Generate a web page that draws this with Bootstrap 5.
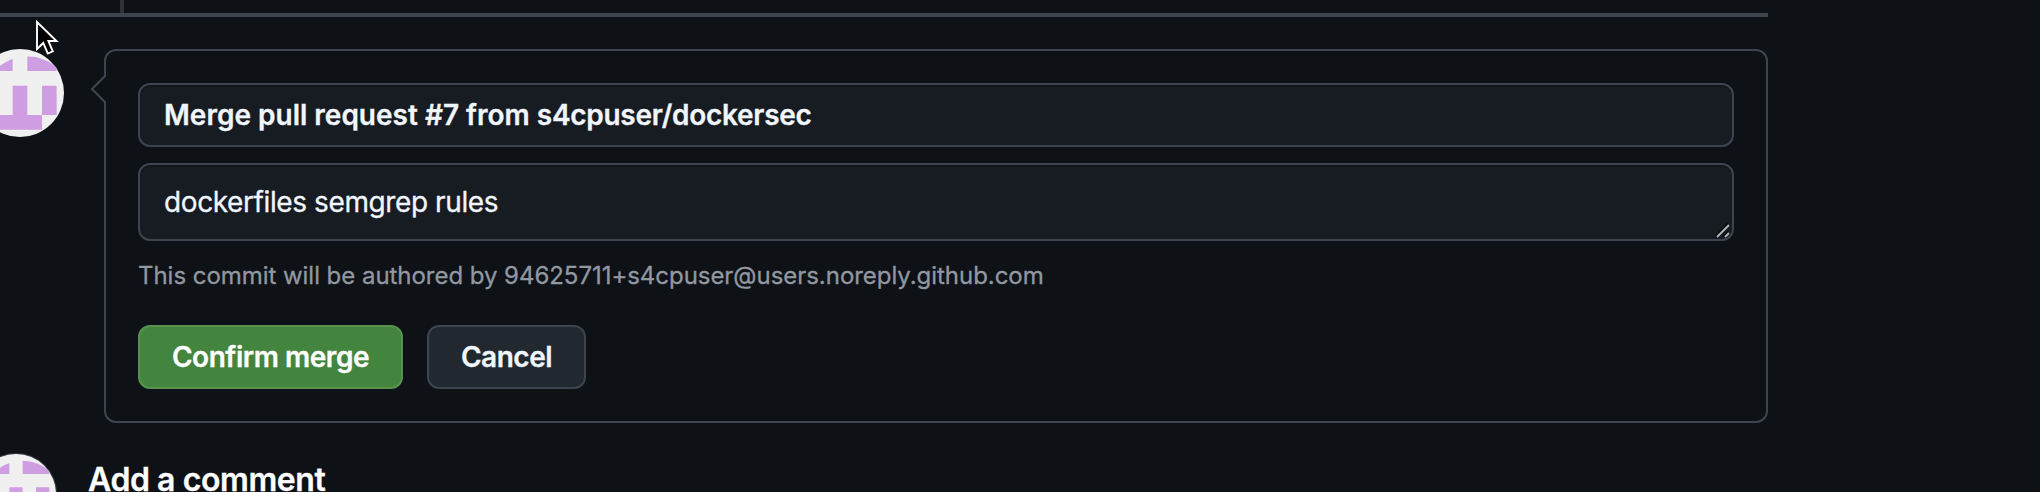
<!DOCTYPE html>
<html lang="en" data-bs-theme="dark">
<head>
<meta charset="utf-8">
<meta name="viewport" content="width=device-width, initial-scale=1">
<title>Merge pull request</title>
<link href="https://cdn.jsdelivr.net/npm/bootstrap@5.3.0/dist/css/bootstrap.min.css" rel="stylesheet">
<style>
  body { height: 492px; background: #0e1116; color: #f0f6fc; font-family: Inter, "Liberation Sans", sans-serif; font-size: 28px; line-height: 40px; -webkit-text-stroke: .3px; }
  .page-col { width: 1768px; height: 492px; }
  .timeline-end { height: 17px; border-bottom: 4px solid #3d444d; padding-left: 120px; }
  .timeline-end div { width: 4px; height: 13px; background: #303237; }
  .avatar-lg { width: 88px; height: 88px; margin-left: -24px; }
  .avatar-sm { width: 82px; height: 82px; margin-left: -25px; }
  .merge-row { margin-top: 32px; gap: 40px; }
  .merge-box { height: 374px; padding: 32px; background: #0e1116; border: 2px solid #3d444d; border-radius: 12px; }
  .caret { left: -17px; top: 23px; }
  .field { display: block; width: 100%; padding: 10px 24px; background: #171b22; border: 2px solid #3d444d; border-radius: 12px; color: #f0f6fc; box-shadow: inset 0 2px 0 #12171d; line-height: 40px; overflow: hidden; white-space: nowrap; }
  .field-title { height: 64px; font-weight: 600; letter-spacing: 0; }
  .field-title span { letter-spacing: -.28px; }
  .field-body { height: 78px; margin-top: 16px; padding-top: 17px; letter-spacing: -.4px; }
  .grip { right: 2px; bottom: 1px; }
  .author-note { margin: 17px 0 0; height: 36px; line-height: 36px; font-size: 24px; color: #9198a1; white-space: nowrap; letter-spacing: -.04px; }
  .actions { margin-top: 31px; gap: 24px; }
  .act { height: 64px; padding: 0; font-size: 28px; line-height: 60px; font-weight: 600; border: 2px solid; border-radius: 12px; white-space: nowrap; letter-spacing: -.47px; }
  .act-merge { width: 265px; background: #43853f; border-color: #57934f; color: #fff; }
  .act-cancel { width: 159px; background: #212830; border-color: #3d444d; color: #f0f6fc; }
  .comment-row { margin-top: 30px; height: 39px; gap: 31px; }
  .comment-title { font-size: 32px; line-height: 48px; font-weight: 600; margin: 3px 0 0; white-space: nowrap; letter-spacing: -.42px; }
  .pointer { left: 34px; top: 17px; }
</style>
</head>
<body class="overflow-hidden position-relative">
<svg width="0" height="0" class="position-absolute" aria-hidden="true">
  <symbol id="identicon" viewBox="0 0 12 12">
    <circle cx="6" cy="6" r="6" fill="#f0f0f0"/>
    <path clip-path="circle(6px at 6px 6px)" fill="#cf9de1" d="M1 1h4v2H1zM7 1h4v2H7zM1 5h2v4H1zM5 5h2v4H5zM9 5h2v4H9zM3 9h6v2H3z"/>
  </symbol>
</svg>
<main class="page-col">
  <div class="timeline-end"><div></div></div>
  <section class="merge-row d-flex align-items-start">
    <svg class="avatar-lg flex-shrink-0"><use href="#identicon"/></svg>
    <div class="merge-box position-relative flex-grow-1">
      <svg class="caret position-absolute" width="17" height="30" viewBox="0 0 17 30"><path d="M15 3h2v24h-2z" fill="#0e1116"/><path d="M16 2 3 15l13 13" fill="#0e1116" stroke="#3d444d" stroke-width="2.200"/></svg>
      <div class="field field-title">Merge pull request #7 from <span>s4cpuser/dockersec</span></div>
      <div class="field field-body position-relative">dockerfiles semgrep rules
        <svg class="grip position-absolute" width="15" height="15" viewBox="0 0 15 15" fill="none"><path d="M1 14 14 1M9 14l5-5" stroke="#0b0d10" stroke-width="4"/><path d="M2 14 14 2M10 14l4-4" stroke="#b3b4b6" stroke-width="1.900"/></svg>
      </div>
      <p class="author-note">This commit will be authored by 94625711+s4cpuser@users.noreply.github.com</p>
      <div class="actions d-flex">
        <button type="button" class="btn act act-merge">Confirm merge</button>
        <button type="button" class="btn act act-cancel">Cancel</button>
      </div>
    </div>
  </section>
  <section class="comment-row d-flex">
    <svg class="avatar-sm flex-shrink-0" viewBox="0 0 82 82"><circle cx="41" cy="41" r="41" fill="#3a3c40"/><use href="#identicon" x="1" y="1" width="80" height="80"/></svg>
    <h2 class="comment-title">Add a comment</h2>
  </section>
</main>
<svg class="pointer position-absolute" width="28" height="42" viewBox="0 0 28 42"><path d="M3 5v27l6.300-6 4.500 10.500 5-2.200-4.400-10.300H22.500z" fill="#000" stroke="#fff" stroke-width="1.900"/></svg>
<script src="https://cdn.jsdelivr.net/npm/bootstrap@5.3.0/dist/js/bootstrap.bundle.min.js"></script>
</body>
</html>
